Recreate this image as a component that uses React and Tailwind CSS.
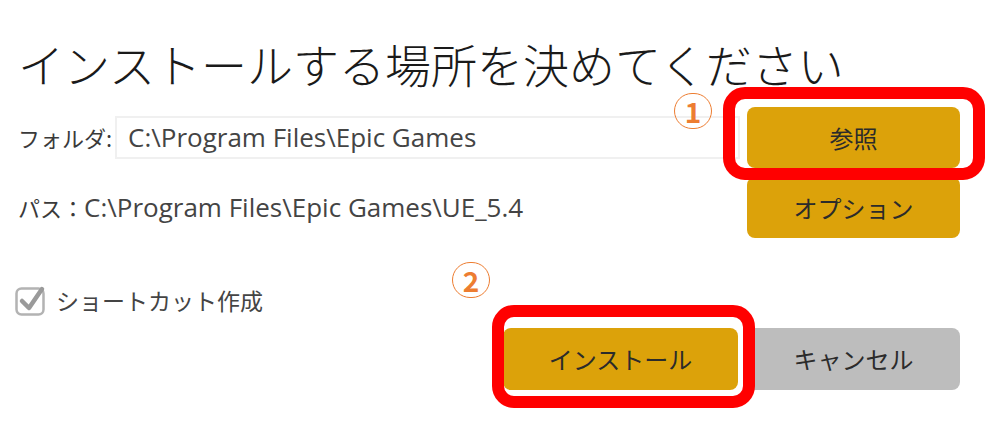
const jp = { fontFamily: '"Noto Sans CJK JP", "Noto Sans", sans-serif' }
const latin = { fontFamily: '"Open Sans", "Noto Sans CJK JP", sans-serif' }

function Circled({ n, className }) {
  return (
    <div
      className={`absolute flex items-center justify-center w-[38px] h-[36px] rounded-full border-[1.5px] border-[#ed7d31] text-[#ed7d31] text-[28px] font-bold leading-none ${className}`}
      style={jp}
    >
      {n}
    </div>
  )
}

function Check() {
  return (
    <svg width="32" height="32" viewBox="0 0 32 32" className="shrink-0">
      <rect x="1.5" y="4.5" width="27" height="26" rx="5" fill="#fff" stroke="#b3b3b3" strokeWidth="2.5" />
      <path d="M7 17 L14 24 L27 5" fill="none" stroke="#9a9a9a" strokeWidth="4.5" strokeLinecap="round" strokeLinejoin="round" />
    </svg>
  )
}

export default function App() {
  return (
    <div className="relative w-[988px] h-[421px] overflow-hidden bg-white text-[#3a3a3a]" style={jp}>
      <div className="pl-[18px] pt-[40px]">
        <h1 className="text-[46px] leading-none font-light text-[#1a1a1a]">
          インストールする場所を決めてください
        </h1>

        {/* folder row */}
        <div className="flex items-center mt-[21px] h-[61px]">
          <span className="w-[97px] text-[22px]">フォルダ:</span>
          <div className="flex items-center w-[625px] h-[43px] border-2 border-[#f0f0f0] pl-[11px]">
            <span className="text-[26px] text-[#444]" style={latin}>
              C:\Program Files\Epic Games
            </span>
          </div>
          <button className="ml-[7px] w-[213px] h-[61px] rounded-[8px] bg-[#dca20a] text-[24px] text-[#2b2b2b]">
            参照
          </button>
        </div>

        {/* path row */}
        <div className="flex items-center mt-[9px] h-[61px]">
          <span className="flex-1 text-[22px]">
            パス：<span className="text-[26px] text-[#444]" style={latin}>C:\Program Files\Epic Games\UE_5.4</span>
          </span>
          <button className="mr-[28px] w-[213px] h-[61px] rounded-[8px] bg-[#dca20a] text-[24px] text-[#2b2b2b]">
            オプション
          </button>
        </div>

        {/* shortcut */}
        <div className="flex items-center gap-[9px] mt-[46px] -ml-[3px] h-[32px]">
          <Check />
          <span className="text-[23px] text-[#444]">ショートカット作成</span>
        </div>

        {/* actions */}
        <div className="flex justify-end gap-[9px] mt-[12px] pr-[28px]">
          <button className="w-[235px] h-[62px] rounded-[8px] bg-[#dca20a] text-[24px] text-[#2b2b2b]">
            インストール
          </button>
          <button className="w-[213px] h-[62px] rounded-[8px] bg-[#bdbdbd] text-[24px] text-[#2b2b2b]">
            キャンセル
          </button>
        </div>
      </div>

      {/* annotations */}
      <div className="absolute left-[723px] top-[87px] w-[262px] h-[93px] border-[12px] border-[#ff0000] rounded-[22px]" />
      <div className="absolute left-[492px] top-[305px] w-[263px] h-[103px] border-[12px] border-[#ff0000] rounded-[22px]" />
      <Circled n="1" className="left-[674px] top-[93px]" />
      <Circled n="2" className="left-[452px] top-[262px]" />
    </div>
  )
}
